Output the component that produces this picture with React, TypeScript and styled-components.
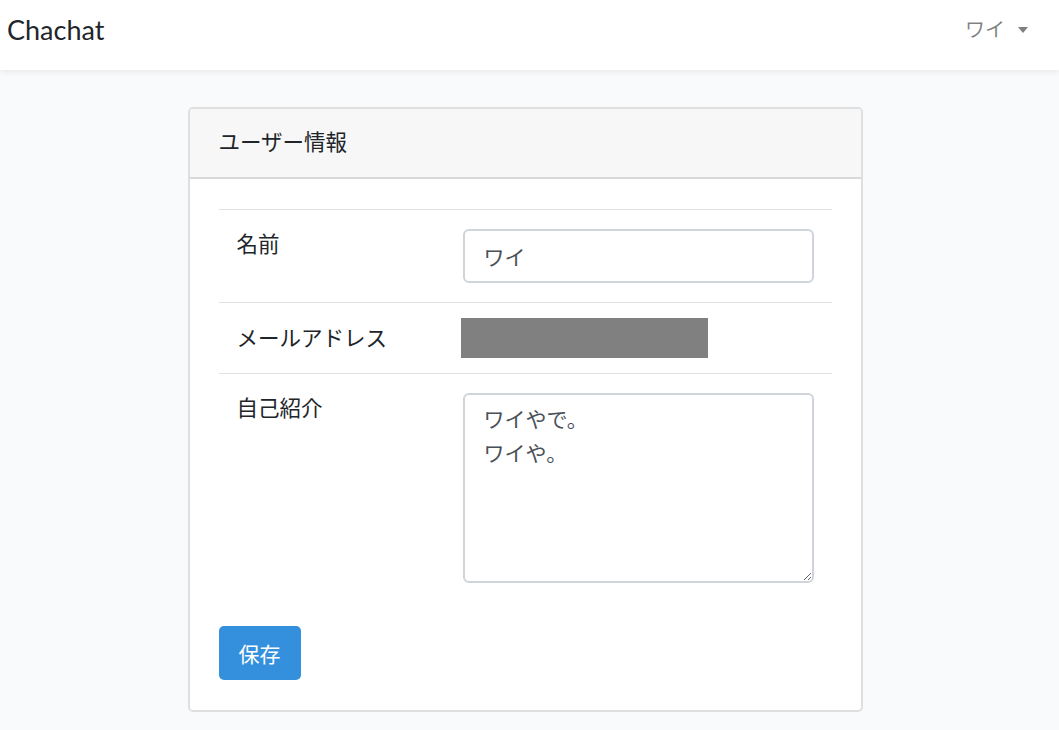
import React from "react";
import styled, { createGlobalStyle } from "styled-components";

const GlobalStyle = createGlobalStyle`
  html, body {
    margin: 0;
    padding: 0;
    background: #f8fafc;
  }
  body {
    font-family: "Lato", "Noto Sans CJK JP", sans-serif;
    font-size: 21.5px;
    line-height: 1.45;
    color: #212529;
  }
`;

const App = () => {
  return (
    <>
      <GlobalStyle />
      <StNavbar>
        <StBrand>Chachat</StBrand>
        <StUserMenu>
          <span>ワイ</span>
          <StCaret />
        </StUserMenu>
      </StNavbar>

      <StMain>
        <StCard>
          <StCardHeader>ユーザー情報</StCardHeader>
          <StCardBody>
            <StTable>
              <tbody>
                <StRow $pad={19}>
                  <StLabelCell>名前</StLabelCell>
                  <StValueCell>
                    <StInput defaultValue="ワイ" />
                  </StValueCell>
                </StRow>
                <StRow $pad={15}>
                  <StLabelCell $center>メールアドレス</StLabelCell>
                  <StValueCell>
                    <StMasked />
                  </StValueCell>
                </StRow>
                <StRow $pad={19}>
                  <StLabelCell>自己紹介</StLabelCell>
                  <StValueCell>
                    <StTextarea defaultValue={"ワイやで。\nワイや。"} />
                  </StValueCell>
                </StRow>
              </tbody>
            </StTable>
            <StButton>保存</StButton>
          </StCardBody>
        </StCard>
      </StMain>
    </>
  );
};

export default App;

const StNavbar = styled.nav`
  height: 70px;
  background: #fff;
  box-shadow: 0 2px 5px rgba(0, 0, 0, 0.07);
  display: flex;
  align-items: center;
  justify-content: space-between;
  padding: 0 31px 12px 7px;
  box-sizing: border-box;
  position: relative;
  z-index: 1;
`;

const StBrand = styled.div`
  font-size: 27px;
  font-weight: 400;
  color: #212529;
  line-height: 1;
`;

const StUserMenu = styled.div`
  display: flex;
  align-items: center;
  gap: 13px;
  color: rgba(0, 0, 0, 0.5);
  font-size: 20px;
  line-height: 1;
`;

const StCaret = styled.span`
  width: 0;
  height: 0;
  border-left: 5px solid transparent;
  border-right: 5px solid transparent;
  border-top: 6px solid rgba(0, 0, 0, 0.5);
  margin-top: 1px;
`;

const StMain = styled.main`
  display: flex;
  justify-content: center;
  padding: 37px 9px 18px 0;
`;

const StCard = styled.section`
  width: 675px;
  box-sizing: border-box;
  background: #fff;
  border: 2px solid #dfdfdf;
  border-radius: 5px;
  overflow: hidden;
`;

const StCardHeader = styled.div`
  background: #f7f7f7;
  border-bottom: 2px solid #d9d9d9;
  padding: 18px 29px 19px;
  line-height: 31px;
`;

const StCardBody = styled.div`
  padding: 30px 29px 30px;
`;

const StTable = styled.table`
  width: 100%;
  border-collapse: collapse;
  margin-bottom: 24px;
`;

const StRow = styled.tr<{ $pad: number }>`
  border-top: 1px solid #dee2e6;
  td {
    padding-top: ${({ $pad }) => $pad}px;
    padding-bottom: ${({ $pad }) => $pad}px;
  }
`;

const StLabelCell = styled.td<{ $center?: boolean }>`
  width: 210px;
  padding-left: 18px;
  padding-right: 0;
  vertical-align: ${({ $center }) => ($center ? "middle" : "top")};
  line-height: 31px;
`;

const StValueCell = styled.td`
  padding-left: 16px;
  padding-right: 18px;
  vertical-align: top;
`;

const StInput = styled.input`
  display: block;
  width: 100%;
  height: 54px;
  box-sizing: border-box;
  border: 2px solid #cfd4da;
  border-radius: 6px;
  padding: 0 19px;
  font-family: inherit;
  font-size: 21px;
  color: #495057;
  outline: none;
`;

const StMasked = styled.div`
  width: 247px;
  height: 40px;
  background: #808080;
  margin-left: -2px;
`;

const StTextarea = styled.textarea`
  display: block;
  width: 100%;
  height: 190px;
  box-sizing: border-box;
  border: 2px solid #cfd4da;
  border-radius: 6px;
  padding: 7px 19px;
  font-family: inherit;
  font-size: 21px;
  line-height: 34px;
  color: #495057;
  outline: none;
  resize: vertical;
`;

const StButton = styled.button`
  display: block;
  height: 54px;
  padding: 0 20px;
  border: none;
  border-radius: 5px;
  background: #3490dc;
  color: #fff;
  font-family: inherit;
  font-size: 21px;
  cursor: pointer;
`;
